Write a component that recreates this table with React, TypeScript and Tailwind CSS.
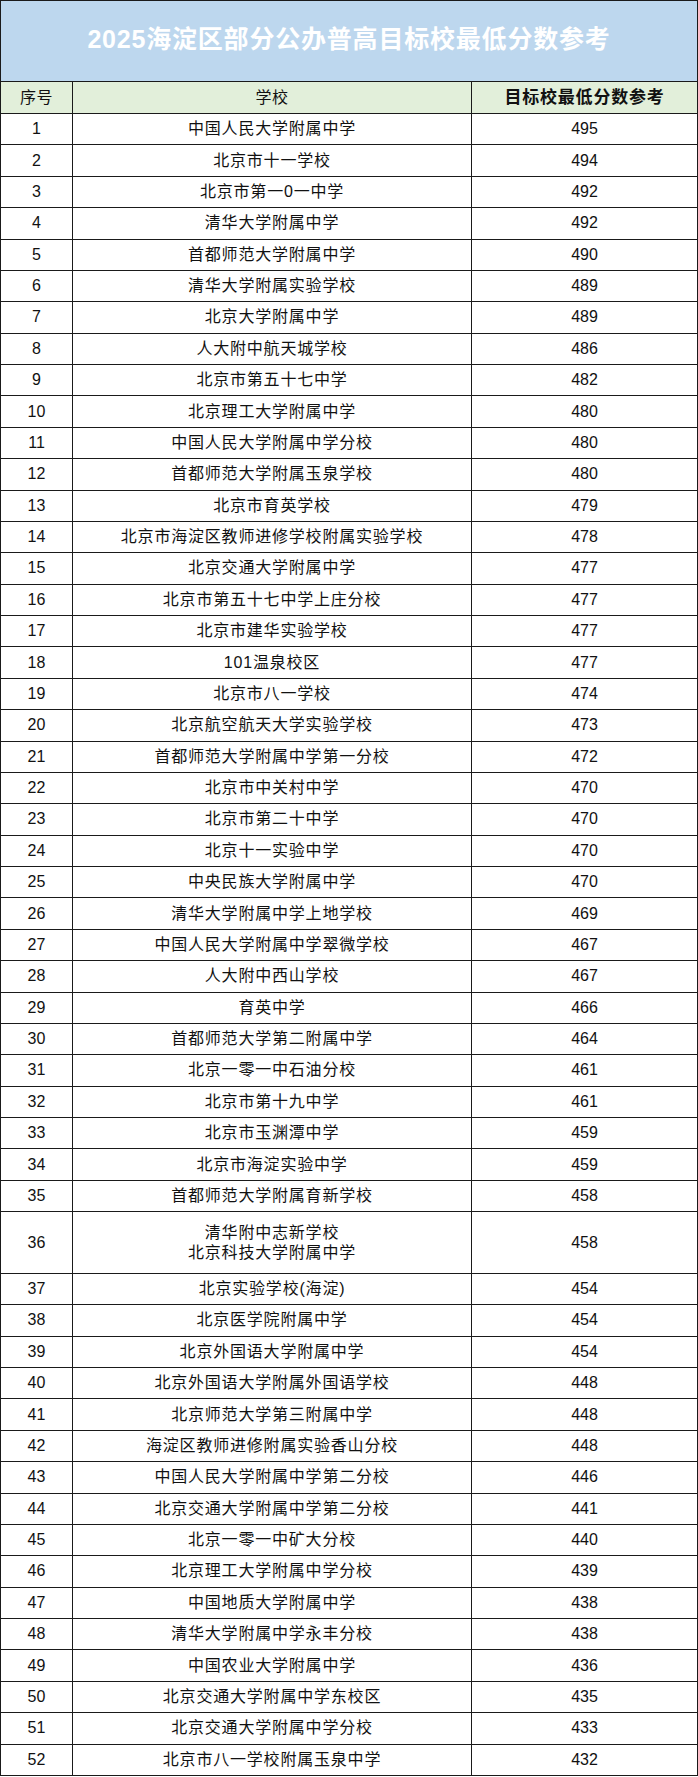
// Haidian public high schools: lowest target-school scores, 2025

type Row = {
  no: number;
  school: string[];
  score: number;
};

const rows: Row[] = [
  { no: 1, school: ['中国人民大学附属中学'], score: 495 },
  { no: 2, school: ['北京市十一学校'], score: 494 },
  { no: 3, school: ['北京市第一0一中学'], score: 492 },
  { no: 4, school: ['清华大学附属中学'], score: 492 },
  { no: 5, school: ['首都师范大学附属中学'], score: 490 },
  { no: 6, school: ['清华大学附属实验学校'], score: 489 },
  { no: 7, school: ['北京大学附属中学'], score: 489 },
  { no: 8, school: ['人大附中航天城学校'], score: 486 },
  { no: 9, school: ['北京市第五十七中学'], score: 482 },
  { no: 10, school: ['北京理工大学附属中学'], score: 480 },
  { no: 11, school: ['中国人民大学附属中学分校'], score: 480 },
  { no: 12, school: ['首都师范大学附属玉泉学校'], score: 480 },
  { no: 13, school: ['北京市育英学校'], score: 479 },
  { no: 14, school: ['北京市海淀区教师进修学校附属实验学校'], score: 478 },
  { no: 15, school: ['北京交通大学附属中学'], score: 477 },
  { no: 16, school: ['北京市第五十七中学上庄分校'], score: 477 },
  { no: 17, school: ['北京市建华实验学校'], score: 477 },
  { no: 18, school: ['101温泉校区'], score: 477 },
  { no: 19, school: ['北京市八一学校'], score: 474 },
  { no: 20, school: ['北京航空航天大学实验学校'], score: 473 },
  { no: 21, school: ['首都师范大学附属中学第一分校'], score: 472 },
  { no: 22, school: ['北京市中关村中学'], score: 470 },
  { no: 23, school: ['北京市第二十中学'], score: 470 },
  { no: 24, school: ['北京十一实验中学'], score: 470 },
  { no: 25, school: ['中央民族大学附属中学'], score: 470 },
  { no: 26, school: ['清华大学附属中学上地学校'], score: 469 },
  { no: 27, school: ['中国人民大学附属中学翠微学校'], score: 467 },
  { no: 28, school: ['人大附中西山学校'], score: 467 },
  { no: 29, school: ['育英中学'], score: 466 },
  { no: 30, school: ['首都师范大学第二附属中学'], score: 464 },
  { no: 31, school: ['北京一零一中石油分校'], score: 461 },
  { no: 32, school: ['北京市第十九中学'], score: 461 },
  { no: 33, school: ['北京市玉渊潭中学'], score: 459 },
  { no: 34, school: ['北京市海淀实验中学'], score: 459 },
  { no: 35, school: ['首都师范大学附属育新学校'], score: 458 },
  { no: 36, school: ['清华附中志新学校', '北京科技大学附属中学'], score: 458 },
  { no: 37, school: ['北京实验学校(海淀)'], score: 454 },
  { no: 38, school: ['北京医学院附属中学'], score: 454 },
  { no: 39, school: ['北京外国语大学附属中学'], score: 454 },
  { no: 40, school: ['北京外国语大学附属外国语学校'], score: 448 },
  { no: 41, school: ['北京师范大学第三附属中学'], score: 448 },
  { no: 42, school: ['海淀区教师进修附属实验香山分校'], score: 448 },
  { no: 43, school: ['中国人民大学附属中学第二分校'], score: 446 },
  { no: 44, school: ['北京交通大学附属中学第二分校'], score: 441 },
  { no: 45, school: ['北京一零一中矿大分校'], score: 440 },
  { no: 46, school: ['北京理工大学附属中学分校'], score: 439 },
  { no: 47, school: ['中国地质大学附属中学'], score: 438 },
  { no: 48, school: ['清华大学附属中学永丰分校'], score: 438 },
  { no: 49, school: ['中国农业大学附属中学'], score: 436 },
  { no: 50, school: ['北京交通大学附属中学东校区'], score: 435 },
  { no: 51, school: ['北京交通大学附属中学分校'], score: 433 },
  { no: 52, school: ['北京市八一学校附属玉泉中学'], score: 432 },
];

const cjk = "font-['Liberation_Sans','Noto_Sans_CJK_SC',sans-serif]";

export default function App() {
  return (
    <div className={`w-[698px] bg-white text-[#111] ${cjk}`}>
      <div className="border border-[#1a1a1a]">
        {/* Title */}
        <div className="flex h-[81px] items-center justify-center border-b border-[#1a1a1a] bg-[#bdd7ee] pb-[2px]">
          <h1 className="text-[25px] font-bold tracking-[0.8px] text-white">
            2025海淀区部分公办普高目标校最低分数参考
          </h1>
        </div>

        {/* Header */}
        <div className="grid h-[32px] grid-cols-[72px_399px_1fr] border-b border-[#1a1a1a] bg-[#e2efda]">
          <div className="flex items-center justify-center border-r border-[#1a1a1a] text-[16px] tracking-[0.5px]">序号</div>
          <div className="flex items-center justify-center border-r border-[#1a1a1a] text-[16px] tracking-[0.5px]">学校</div>
          <div className="flex items-center justify-center text-[17px] font-bold tracking-[0.8px]">
            目标校最低分数参考
          </div>
        </div>

        {/* Body */}
        <div className="flex h-[1661px] flex-col">
          {rows.map((row) => (
            <div
              key={row.no}
              className={`grid min-h-0 grid-cols-[72px_399px_1fr] border-b border-[#1a1a1a] last:border-b-0 ${
                row.school.length > 1 ? 'flex-[2]' : 'flex-1'
              }`}
            >
              <div className="flex items-center justify-center border-r border-[#1a1a1a] text-[16px]">
                {row.no}
              </div>
              <div className="flex flex-col items-center justify-center border-r border-[#1a1a1a] text-[16px] leading-[20px] tracking-[0.8px]">
                {row.school.map((line) => (
                  <span key={line}>{line}</span>
                ))}
              </div>
              <div className="flex items-center justify-center text-[16px]">{row.score}</div>
            </div>
          ))}
        </div>
      </div>
    </div>
  );
}
